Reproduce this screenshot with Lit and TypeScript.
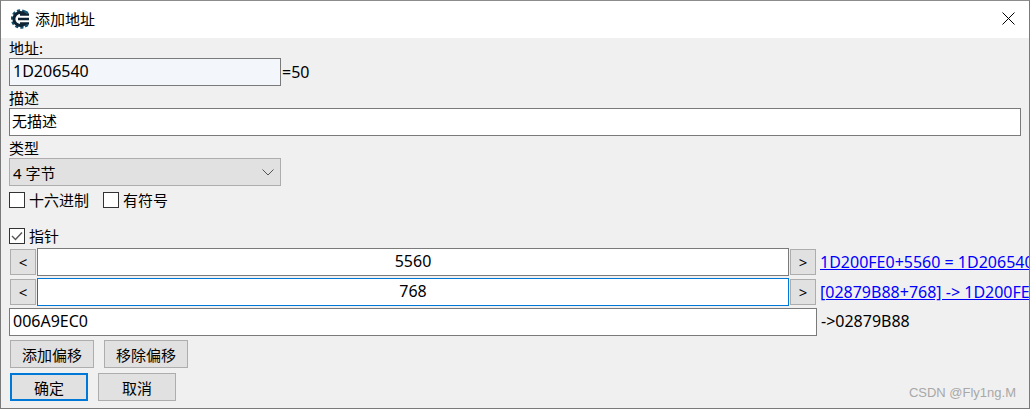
import { LitElement, html, css } from "lit";
import { customElement } from "lit/decorators.js";

@customElement("app-root")
export class AppRoot extends LitElement {
  static styles = css`
    :host {
      display: block;
      width: 1030px;
      height: 409px;
      font-family: "Noto Sans", "Noto Sans CJK SC", sans-serif;
      font-size: 16px;
      color: #000;
    }
    * { box-sizing: border-box; }
    .win {
      position: relative;
      width: 1030px;
      height: 409px;
      border: 1px solid #7a7a7a;
      border-top-color: #8c8c8c;
      background: #f0f0f0;
      overflow: hidden;
      display: flex;
      flex-direction: column;
    }
    .title {
      height: 37px;
      flex: none;
      background: #fff;
      display: flex;
      align-items: center;
      padding: 0 0 2px 10px;
      gap: 4px;
      font-size: 15px;
    }
    .title svg.logo { flex: none; }
    .close { margin-left: auto; margin-right: 14px; display: flex; }
    .body {
      flex: 1;
      padding: 0 0 0 8px;
      display: flex;
      flex-direction: column;
      align-items: flex-start;
    }
    .label { height: 20px; line-height: 21px; font-size: 15px; }
    .label.next { margin-top: 2px; }
    .field {
      height: 28px;
      border: 1px solid #7a7a7a;
      background: #fff;
      padding-left: 3px;
      line-height: 25px;
      font-size: 16px;
      flex: none;
    }
    .cjk { font-size: 15px; padding-left: 2px; }
    .row { display: flex; align-items: center; }
    .addr { width: 272px; background: #f3f7fc; }
    .desc { width: 1012px; }
    .eq { margin-left: 1px; }
    .select {
      width: 272px;
      height: 28px;
      border: 1px solid #adadad;
      background: #e1e1e1;
      display: flex;
      align-items: center;
      justify-content: space-between;
      padding: 0 6px 0 3px;
      font-size: 15px;
    }
    .checks { display: flex; align-items: center; margin-top: 6px; height: 16px; }
    .check { display: flex; align-items: center; gap: 4px; font-size: 15px; margin-right: 14px; line-height: 14px; }
    .box {
      width: 16px;
      height: 16px;
      border: 1px solid #333;
      background: #fff;
      display: flex;
      flex: none;
    }
    .ptr { margin-top: 20px; }
    .off { display: flex; align-items: center; height: 28px; margin-top: 2px; }
    .off.first { margin-top: 4px; }
    .btn {
      border: 1px solid #adadad;
      background: #e1e1e1;
      display: flex;
      align-items: center;
      justify-content: center;
      height: 28px;
      font-size: 15px;
      flex: none;
    }
    .mini { width: 26px; height: 26px; margin: 0 1px; font-size: 15px; }
    .num { width: 752px; text-align: center; padding: 0; }
    .num.focus { border-color: #0078d7; }
    .link {
      margin-left: 3px;
      width: 209px;
      overflow: hidden;
      white-space: nowrap;
      color: #0000ff;
      text-decoration: underline;
      font-size: 16px;
    }
    .base { width: 808px; margin-top: 2px; }
    .arrow { margin-left: 4px; }
    .btns { display: flex; margin-left: 1px; }
    .b1 { margin-top: 4px; gap: 10px; }
    .b1 .btn { width: 84px; }
    .b2 { margin-top: 5px; gap: 10px; }
    .b2 .btn { width: 78px; }
    .b2 .default { border: 2px solid #0078d7; }
    .mark {
      position: absolute;
      right: 13px;
      bottom: 8px;
      color: #a8a8a8;
      font-size: 13px;
      font-family: "Liberation Sans", sans-serif;
    }
  `;

  render() {
    return html`
      <div class="win">
        <div class="title">
          <svg class="logo" width="20" height="20" viewBox="0 0 20 20">
            <circle cx="9.5" cy="10" r="8.2" fill="none" stroke="#14506f" stroke-width="3" stroke-dasharray="3 2"></circle>
            <circle cx="9.5" cy="10" r="6.6" fill="none" stroke="#0e2233" stroke-width="3"></circle>
            <rect x="12" y="6" width="8" height="8" fill="#fff"></rect>
            <path d="M7 10h11M9 5.6h9M9 14.4h9" stroke="#0e2233" stroke-width="2.4" fill="none"></path>
            <path d="M14 2.5l3 1.5M14 17.5l3-1.5" stroke="#14506f" stroke-width="2" fill="none"></path>
          </svg>
          <span>添加地址</span>
          <span class="close">
            <svg width="13" height="13" viewBox="0 0 13 13"><path d="M0.5 0.5l12 12M12.5 0.5l-12 12" stroke="#000" stroke-width="1" fill="none"></path></svg>
          </span>
        </div>
        <div class="body">
          <div class="label">地址:</div>
          <div class="row">
            <div class="field addr">1D206540</div>
            <span class="eq">=50</span>
          </div>
          <div class="label next">描述</div>
          <div class="field desc cjk">无描述</div>
          <div class="label next">类型</div>
          <div class="select">
            <span>4 字节</span>
            <svg width="12" height="7" viewBox="0 0 12 7"><path d="M0.5 0.5L6 6l5.5-5.5" stroke="#555" stroke-width="1" fill="none"></path></svg>
          </div>
          <div class="checks">
            <label class="check"><span class="box"></span>十六进制</label>
            <label class="check"><span class="box"></span>有符号</label>
          </div>
          <div class="checks ptr">
            <label class="check">
              <span class="box"><svg width="14" height="14" viewBox="0 0 14 14"><path d="M2 7l3.5 3.5L12 3.5" stroke="#555" stroke-width="1.4" fill="none"></path></svg></span>
              指针
            </label>
          </div>
          <div class="off first">
            <div class="btn mini">&lt;</div>
            <div class="field num">5560</div>
            <div class="btn mini">&gt;</div>
            <div class="link">1D200FE0+5560 = 1D206540</div>
          </div>
          <div class="off">
            <div class="btn mini">&lt;</div>
            <div class="field num focus">768</div>
            <div class="btn mini">&gt;</div>
            <div class="link">[02879B88+768] -&gt; 1D200FE0</div>
          </div>
          <div class="row">
            <div class="field base">006A9EC0</div>
            <span class="arrow">-&gt;02879B88</span>
          </div>
          <div class="btns b1">
            <div class="btn">添加偏移</div>
            <div class="btn">移除偏移</div>
          </div>
          <div class="btns b2">
            <div class="btn default">确定</div>
            <div class="btn">取消</div>
          </div>
        </div>
        <div class="mark">CSDN @Fly1ng.M</div>
      </div>
    `;
  }
}
